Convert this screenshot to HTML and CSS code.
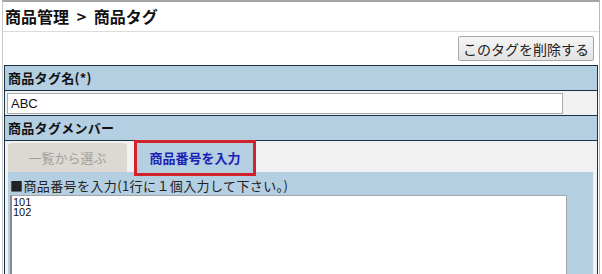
FILE: index.html
```html
<!DOCTYPE html>
<html lang="ja">
<head>
  <meta charset="UTF-8" />
  <title>商品タグ</title>
  <link rel="stylesheet" href="styles.css">
</head>
<body>
  <div class="frame">
    <h1 class="title">商品管理 &gt; 商品タグ</h1>

    <div class="toolbar">
      <button class="btn">このタグを削除する</button>
    </div>

    <div class="form">
      <div class="row-head">商品タグ名(*)</div>
      <div class="row-body name-row">
        <input type="text" class="name-input" value="ABC" />
      </div>
      <div class="row-head">商品タグメンバー</div>
      <div class="row-body member-row">
        <div class="tabs">
          <div class="tab">一覧から選ぶ</div>
          <div class="tab active">商品番号を入力</div>
        </div>
        <div class="panel">
          <p class="panel-label">■商品番号を入力(1行に１個入力して下さい。)</p>
          <textarea class="codes">101
102</textarea>
        </div>
      </div>
    </div>
  </div>
</body>
</html>
```

FILE: styles.css
```css
body {
  margin: 0;
  font-family: "Noto Sans CJK JP", "Noto Sans", sans-serif;
  color: #111;
  background: #fff;
  overflow: hidden;
}

.frame {
  margin-left: 2px;
  width: 596px;
  height: 272px;
  overflow: hidden;
  border-top: 2px solid #a5a5a5;
  border-left: 1px solid #c8c8c8;
  border-right: 1px solid #b8b8b8;
}

.title {
  margin: 0;
  height: 28px;
  padding: 1px 0 0 2px;
  font-size: 16px;
  font-weight: bold;
  line-height: 26px;
  word-spacing: 4px;
  border-bottom: 1px solid #dcdcdc;
}

.toolbar {
  display: flex;
  justify-content: flex-end;
  padding: 4px 5px 4px 0;
}

.btn {
  height: 25px;
  width: 136px;
  padding: 0;
  font-family: inherit;
  font-size: 14px;
  color: #222;
  background: linear-gradient(#f6f6f6, #e2e2e2);
  border: 1px solid #a8a8a8;
  border-radius: 2px;
}

.form {
  margin-left: 1px;
  width: 592px;
  border: 1px solid #1d3144;
  border-bottom: none;
}

.row-head {
  height: 24px;
  padding-left: 3px;
  font-size: 13px;
  font-weight: bold;
  line-height: 24px;
  letter-spacing: 0.3px;
  background: #b4cee2;
  border-bottom: 1px solid #1d3144;
}

.row-body {
  background: #f1f1f1;
  border-bottom: 1px solid #1d3144;
}

.name-row {
  padding: 2px 0 1px 2px;
}

.name-input {
  display: block;
  box-sizing: border-box;
  width: 556px;
  height: 21px;
  padding: 0 3px;
  font-family: "Liberation Sans", sans-serif;
  font-size: 13px;
  color: #111;
  border: 1px solid #ababab;
  background: #fff;
}

.member-row {
  height: 133px;
  padding: 2px 0 0 3px;
  border-bottom: none;
}

.tabs {
  display: flex;
  gap: 7px;
  align-items: flex-start;
  height: 29px;
}

.tab {
  width: 119px;
  height: 29px;
  font-size: 13px;
  line-height: 29px;
  text-align: center;
  color: #a0a0a0;
  background: #dcd8d2;
  border-radius: 4px 4px 0 0;
}

.tab.active {
  position: relative;
  z-index: 1;
  width: 116px;
  height: 30px;
  margin-top: -3px;
  color: #1c22b4;
  font-weight: bold;
  line-height: 30px;
  background: #b4cee2;
  border: 3px solid #d2232a;
  border-radius: 0;
}

.panel {
  width: 583px;
  height: 100px;
  padding: 4px 0 0 2px;
  background: #b4cee2;
}

.panel-label {
  margin: 0;
  font-size: 13px;
  line-height: 19px;
  letter-spacing: 0.4px;
  color: #222;
}

.codes {
  display: block;
  box-sizing: border-box;
  width: 557px;
  height: 90px;
  margin: 0;
  padding: 1px 1px 0;
  font-family: "Liberation Sans Narrow", "Liberation Sans", sans-serif;
  font-size: 11px;
  line-height: 10px;
  color: #111;
  border: 1px solid #a6a6a6;
  border-left: 2px solid #8a8a8a;
  background: #fff;
  resize: none;
}
```
